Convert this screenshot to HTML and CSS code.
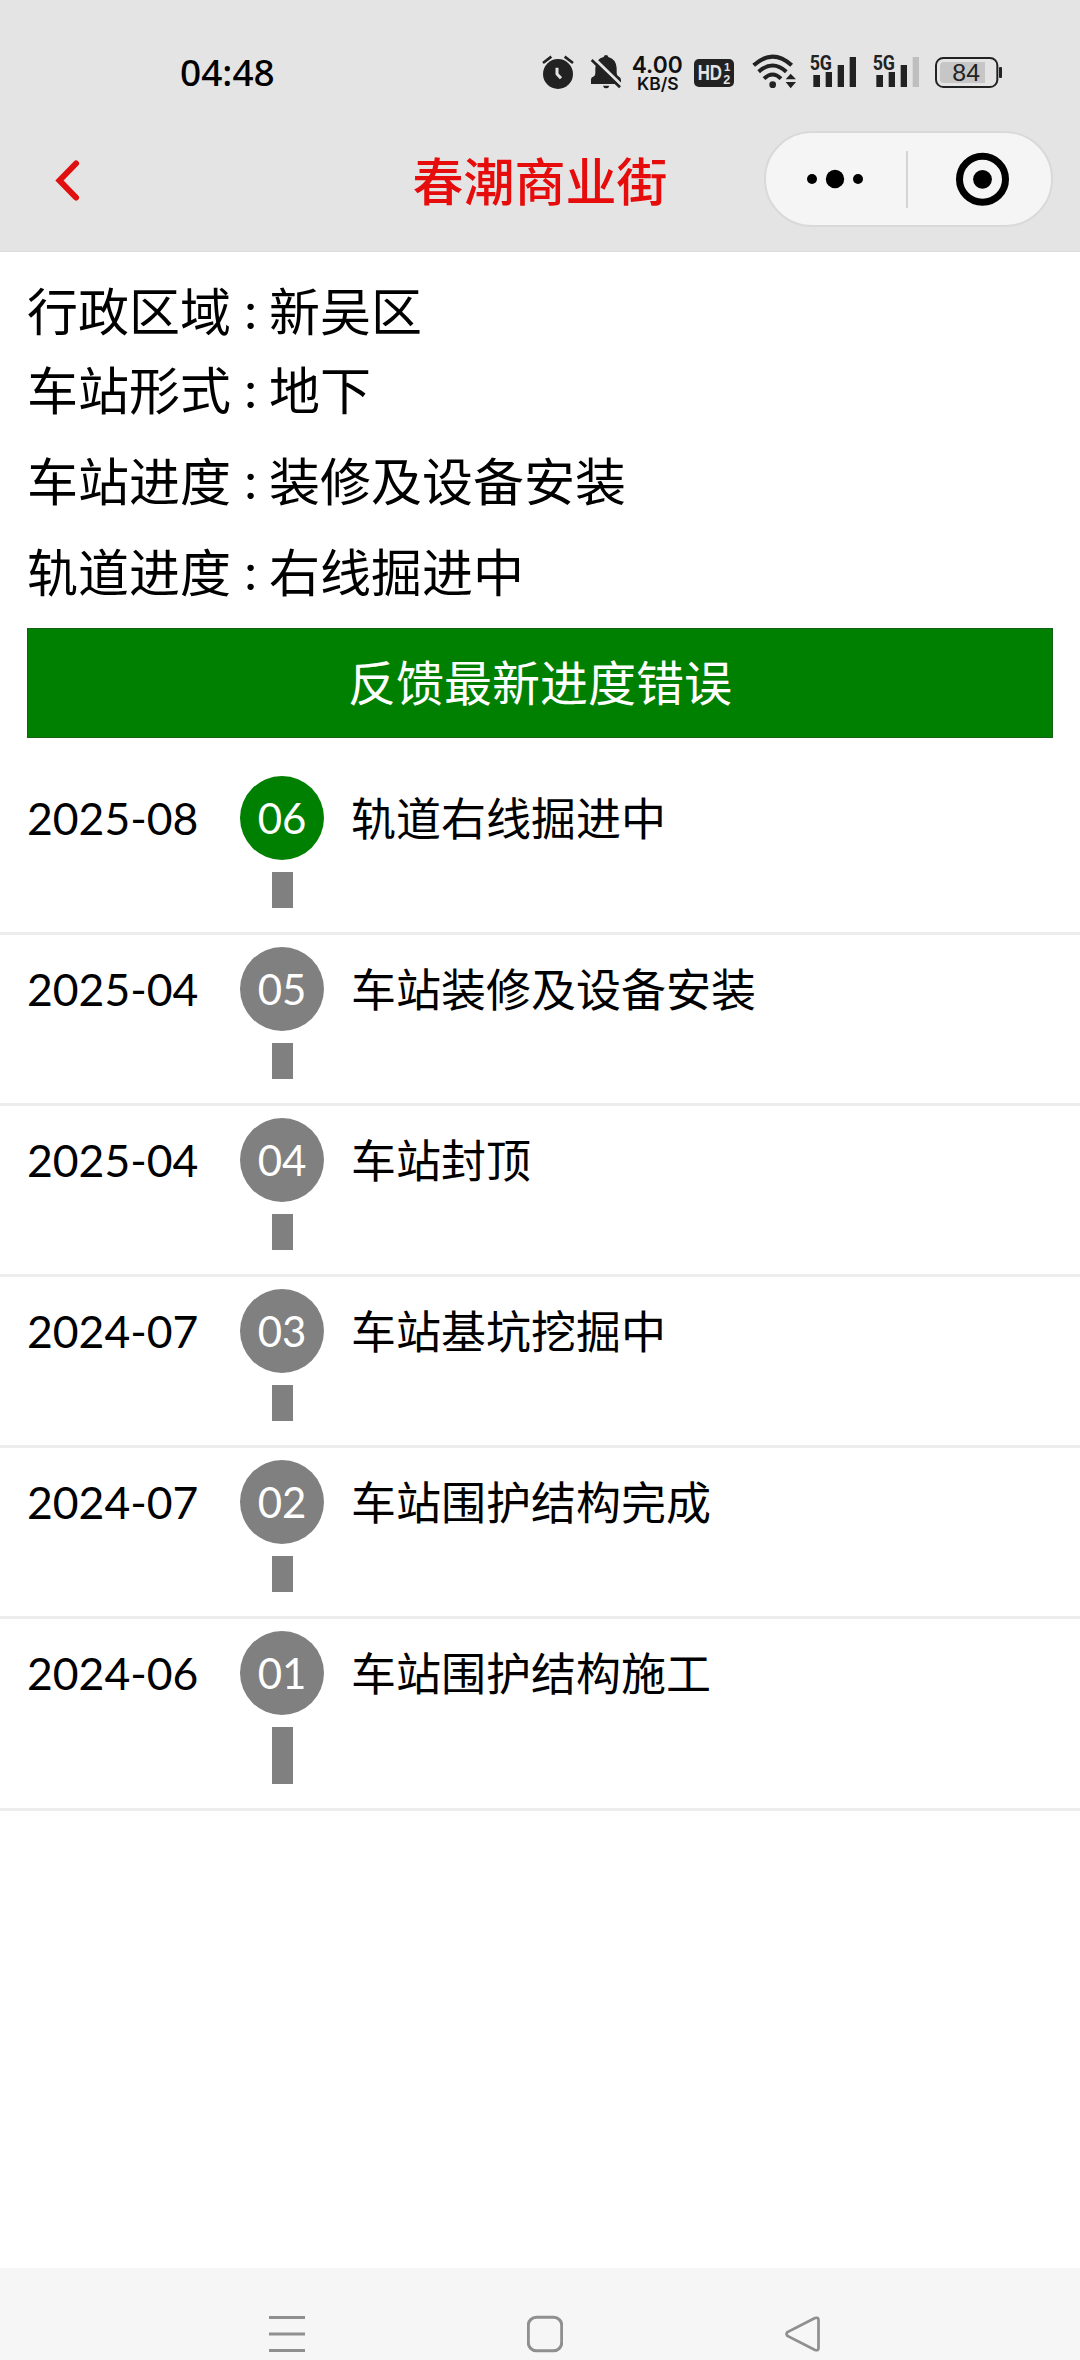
FILE: index.html
```html
<!DOCTYPE html>
<html lang="zh-CN">
<head>
<meta charset="utf-8">
<title>春潮商业街</title>
<link rel="stylesheet" href="styles.css">
</head>
<body>
<div class="screen">
  <header class="header">
    <div class="status">
      <span class="clock">04:48</span>
      <div class="status-icons">
        <svg class="alarm" width="36" height="70" viewBox="60 0 108 210">
          <circle cx="114" cy="102" r="45" fill="#222"/>
          <path d="M69 69 94 50M159 69 134 50" stroke="#222" stroke-width="8" fill="none"/>
          <path d="M111 83V102L123 115" stroke="#e4e4e4" stroke-width="9" stroke-linejoin="round" fill="none"/>
        </svg>
        <svg class="bell" width="34" height="70" viewBox="207 0 102 210">
          <path d="M213 132V118Q213 112 222 109Q226 107 226 98V84Q228 56 251 51Q252 45 258 45T265 51Q288 57 290 84V98Q290 107 295 109Q303 112 303 120V132Z" fill="#222"/>
          <path d="M249 137H268Q266 145 258.500 145T249 137Z" fill="#222"/>
          <path d="M220 53 306 137" stroke="#e4e4e4" stroke-width="9"/>
          <path d="M215 60 300 142" stroke="#222" stroke-width="8"/>
        </svg>
        <svg class="speed" width="54" height="70" viewBox="330 0 162 210">
          <text x="335" y="98" font-size="69" font-weight="600" textLength="153" lengthAdjust="spacingAndGlyphs">4.00</text>
          <text x="351" y="150" font-size="52" font-weight="600" textLength="125" lengthAdjust="spacingAndGlyphs">KB/S</text>
        </svg>
        <svg class="hd" width="40" height="70" viewBox="522 0 120 210">
          <rect x="522" y="57" width="120" height="84" rx="15" fill="#222"/>
          <text class="knock" x="533" y="121" font-size="64" textLength="73" lengthAdjust="spacingAndGlyphs">HD</text>
          <text class="knock" x="612" y="94" font-size="34">1</text>
          <text class="knock" x="610" y="131" font-size="38">2</text>
        </svg>
        <svg class="wifi" width="46" height="70" viewBox="693 0 138 210">
          <g fill="none" stroke="#222" stroke-width="12">
            <path d="M701 76Q758 24 815 76"/>
            <path d="M716 95Q758 58 799 95"/>
            <path d="M732 116Q758 91 783 116"/>
          </g>
          <circle cx="758" cy="134" r="10" fill="#222"/>
          <path d="M797 118 812 101 828 118ZM797 126H828L812 145Z" fill="#222"/>
        </svg>
        <svg class="signal" width="48" height="70" viewBox="147 0 144 210">
          <text class="net" x="149" y="90" font-size="62" textLength="67" lengthAdjust="spacingAndGlyphs">5G</text>
          <path fill="#222" d="M160 105h20v36h-20zM197 96h19v45h-19zM233 75h19v66h-19zM269 51h19v90h-19z"/>
        </svg>
        <svg class="signal" width="48" height="70" viewBox="336 0 144 210">
          <text class="net" x="338" y="90" font-size="62" textLength="67" lengthAdjust="spacingAndGlyphs">5G</text>
          <path fill="#222" d="M349 105h20v36h-20zM386 96h19v45h-19zM422 75h19v66h-19z"/>
          <path fill="#bfbfbf" d="M458 51h19v90h-19z"/>
        </svg>
        <svg class="battery" width="70" height="70" viewBox="522 0 210 210">
          <rect x="528" y="54" width="184" height="87" rx="22" fill="none" stroke="#222" stroke-width="6"/>
          <path d="M552 66H675V129H552Q540 129 540 117V78Q540 66 552 66Z" fill="#c6c6c6"/>
          <rect x="717" y="81" width="9" height="33" rx="3" fill="#222"/>
          <text class="charge" x="577" y="123" font-size="73" textLength="83" lengthAdjust="spacingAndGlyphs">84</text>
        </svg>
      </div>
    </div>
    <div class="navbar">
      <svg class="back" width="27" height="43" viewBox="54 159 27 43"><path d="M76 163.500 59.500 180.500 76 197.500" fill="none" stroke="#e01010" stroke-width="6" stroke-linecap="round"/></svg>
      <h1 class="title">春潮商业街</h1>
      <div class="capsule">
        <svg width="140" height="92" viewBox="766 133 140 92"><circle cx="812" cy="179" r="5"/><circle cx="835" cy="179" r="9.200"/><circle cx="858" cy="179" r="5"/></svg>
        <span class="divider"></span>
        <svg width="143" height="92" viewBox="908 133 143 92"><circle cx="982.500" cy="179.300" r="23" fill="none" stroke="#000" stroke-width="7"/><circle cx="982.500" cy="179.300" r="9.400"/></svg>
      </div>
    </div>
  </header>

  <main class="content">
    <section class="info">
      <p class="line"><span>行政区域</span><span class="colon">:</span><span>新吴区</span></p>
      <p class="line"><span>车站形式</span><span class="colon">:</span><span>地下</span></p>
      <p class="line"><span>车站进度</span><span class="colon">:</span><span>装修及设备安装</span></p>
      <p class="line"><span>轨道进度</span><span class="colon">:</span><span>右线掘进中</span></p>
      <button class="feedback">反馈最新进度错误</button>
    </section>

    <ol class="timeline">
      <li class="step current"><time>2025-08</time><div class="mark"><b>06</b><i></i></div><span class="name">轨道右线掘进中</span></li>
      <li class="step"><time>2025-04</time><div class="mark"><b>05</b><i></i></div><span class="name">车站装修及设备安装</span></li>
      <li class="step"><time>2025-04</time><div class="mark"><b>04</b><i></i></div><span class="name">车站封顶</span></li>
      <li class="step"><time>2024-07</time><div class="mark"><b>03</b><i></i></div><span class="name">车站基坑挖掘中</span></li>
      <li class="step"><time>2024-07</time><div class="mark"><b>02</b><i></i></div><span class="name">车站围护结构完成</span></li>
      <li class="step first"><time>2024-06</time><div class="mark"><b>01</b><i></i></div><span class="name">车站围护结构施工</span></li>
    </ol>
  </main>

  <footer class="system-nav">
    <svg width="36" height="38" viewBox="0 0 36 38"><path d="M0 2.500H36M0 19H36M0 35.500H36" stroke="#8f8f8f" stroke-width="3.200"/></svg>
    <svg width="36" height="38" viewBox="0 0 36 38"><rect x="1.300" y="2.300" width="33.400" height="33.400" rx="8" fill="none" stroke="#8f8f8f" stroke-width="3"/></svg>
    <svg width="36" height="38" viewBox="0 0 36 38"><path d="M30 3 2.500 17Q0.500 19 2.500 21L30 35Q33.500 36 33.500 33V5Q33.500 2 30 3Z" fill="none" stroke="#8f8f8f" stroke-width="2.700"/></svg>
  </footer>
</div>
</body>
</html>
```
FILE: styles.css
```css
* { box-sizing: border-box; }

body {
  margin: 0;
  background: #fff;
  color: #000;
  font-family: "Noto Sans CJK SC", sans-serif;
}

.screen {
  display: flex;
  flex-direction: column;
  width: 1080px;
  height: 2360px;
  overflow: hidden;
}

svg { display: block; flex: none; }

.header {
  height: 252px;
  background: #e4e4e4;
  border-bottom: 1px solid #dcdcdc;
}

.status {
  display: flex;
  justify-content: space-between;
  height: 131px;
  padding: 40px 76px 0 180px;
}

.clock {
  height: 70px;
  font: 500 37px/64px "Noto Sans", sans-serif;
}

.status-icons { display: flex; }
.bell { margin-left: 13px; }
.speed { margin-left: 7px; }
.hd { margin-left: 10px; }
.wifi { margin-left: 17px; }
.signal { margin-left: 12px; }
.signal + .signal { margin-left: 15px; }
.battery { margin-left: 14px; }

.speed text { font-family: Inter, sans-serif; fill: #111; }
.knock { font-family: "Liberation Sans", sans-serif; font-weight: 700; fill: #e4e4e4; }
.net { font-family: Roboto, sans-serif; font-weight: 700; fill: #222; }
.charge { font-family: "Liberation Sans", sans-serif; fill: #222; }

.navbar {
  display: grid;
  grid-template-columns: 1fr auto 1fr;
  align-items: center;
  height: 96px;
  padding: 0 27px;
}

.back { margin: 3px 0 0 27px; }

.title {
  margin: 0;
  color: #e60c0c;
  font-size: 51px;
  font-weight: 500;
  line-height: 90px;
}

.capsule {
  display: flex;
  align-items: center;
  justify-self: end;
  width: 289px;
  height: 96px;
  border: 2px solid #d9d9d9;
  border-radius: 48px;
  background: #f5f5f5;
}

.divider { width: 2px; height: 57px; background: #d5d5d5; }

.content { flex: 1; }

.info { padding: 24px 27px 26px; }

.line {
  display: flex;
  align-items: center;
  height: 91px;
  margin: 0;
  padding-bottom: 5px;
  font-size: 51px;
  line-height: 75px;
}

.line:first-child { height: 69px; padding-bottom: 3px; }

.colon {
  width: 38px;
  padding-left: 1px;
  font-family: Lato, sans-serif;
  text-align: center;
}

.feedback {
  display: block;
  width: 100%;
  height: 110px;
  margin-top: 10px;
  padding: 0 0 6px;
  border: 1px solid #146014;
  background: #008000;
  color: #fff;
  font: 48px/70px "Noto Sans CJK SC", sans-serif;
}

.timeline { margin: 0; padding: 0; list-style: none; }

.step {
  display: flex;
  align-items: flex-start;
  height: 171px;
  padding: 12px 27px 0;
  border-bottom: 3px solid #ededed;
  font-size: 45px;
  line-height: 84px;
}

.step time {
  width: 213px;
  font-family: Lato, sans-serif;
  font-size: 44.500px;
}

.mark {
  display: flex;
  flex-direction: column;
  align-items: center;
  width: 84px;
  gap: 12px;
}

.mark b {
  width: 84px;
  height: 84px;
  border-radius: 50%;
  background: #808080;
  color: #fff;
  font: 400 42px/84px Lato, sans-serif;
  text-align: center;
}

.current b { background: #008000; }

.mark i { width: 21px; height: 36px; background: #808080; }

.first { height: 192px; }
.first i { height: 57px; }

.name { margin-left: 27px; line-height: 82px; }

.system-nav {
  display: flex;
  justify-content: center;
  gap: 222px;
  height: 92px;
  padding: 47px 0 0 10px;
  background: #f6f6f6;
}
```
